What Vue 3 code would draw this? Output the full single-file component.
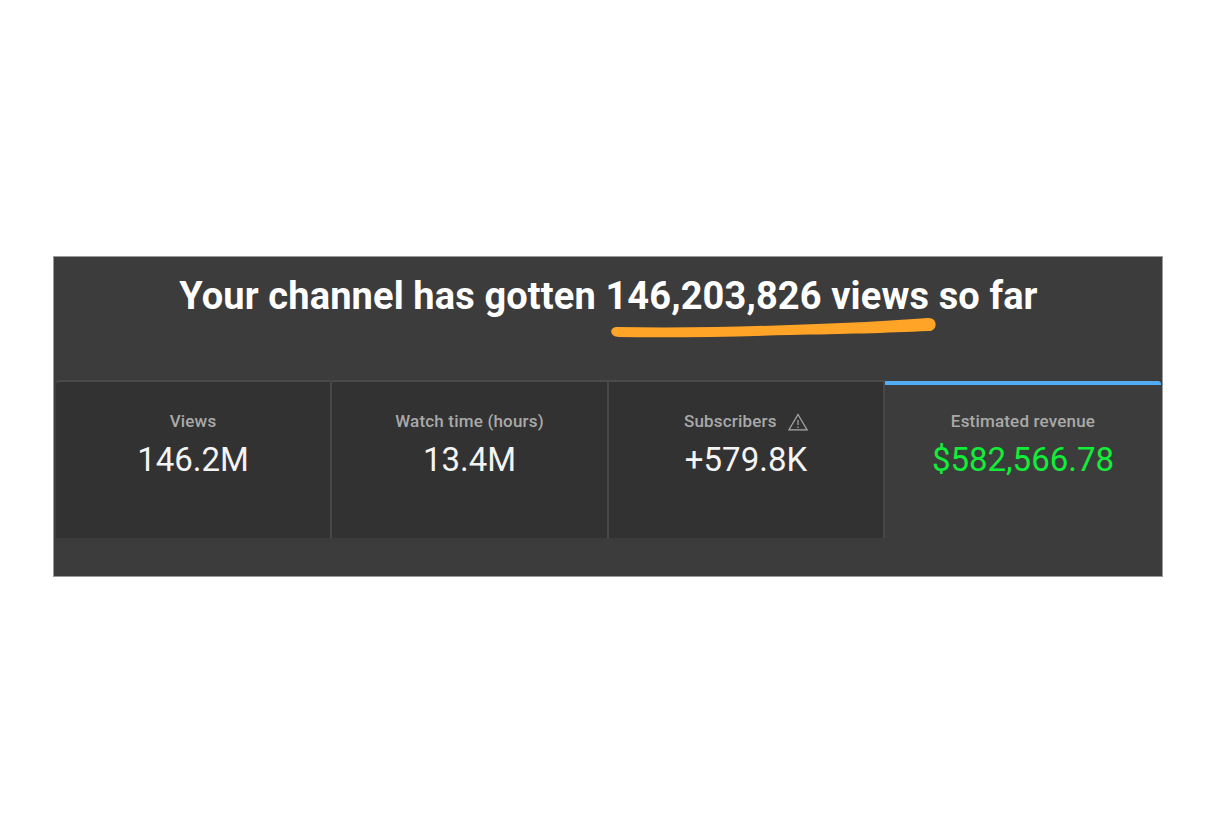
<template>
  <div class="page">
    <section class="panel">
      <h1 class="headline">
        Your channel has gotten
        <span class="marked">
          146,203,826 views
          <svg class="scribble" viewBox="0 0 335 25" aria-hidden="true">
            <path
              d="M12 12C70 13 130 12 185 10C240 8 285 6 323 3C333 2.500 333 15.500 324 16C280 18 240 19 185 20C130 21.500 70 23 14 22C4 22 4 12 12 12Z"
            />
          </svg>
        </span>
        so far
      </h1>

      <div class="tabs">
        <div
          v-for="tab in tabs"
          :key="tab.label"
          class="tab"
          :class="{ active: tab.active }"
        >
          <div class="label">
            {{ tab.label }}
            <svg v-if="tab.warn" class="warn" viewBox="0 0 20 18" aria-hidden="true">
              <path d="M10 1.500L19 16.800H1Z" />
              <path d="M10 7V12M10 13.500V15" />
            </svg>
          </div>
          <div class="value">{{ tab.value }}</div>
        </div>
      </div>
    </section>
  </div>
</template>

<script setup>
const tabs = [
  { label: 'Views', value: '146.2M' },
  { label: 'Watch time (hours)', value: '13.4M' },
  { label: 'Subscribers', value: '+579.8K', warn: true },
  { label: 'Estimated revenue', value: '$582,566.78', active: true }
]
</script>

<style>
html,
body {
  background: #fff;
}
</style>

<style scoped>
.page {
  height: 832px;
  box-sizing: border-box;
  padding: 256px 53px 0;
  font-family: Roboto, "Liberation Sans", sans-serif;
}

.panel {
  width: 1110px;
  height: 321px;
  box-sizing: border-box;
  border: 1px solid #9a9a9a;
  background: #3c3c3c;
  padding: 0 1px 38px 2px;
  display: flex;
  flex-direction: column;
}

.headline {
  margin: 0;
  height: 123px;
  padding-top: 15px;
  box-sizing: border-box;
  text-align: center;
  font-size: 38px;
  line-height: 48px;
  font-weight: 700;
  letter-spacing: 0.12px;
  color: #fff;
}

.marked {
  position: relative;
}

.scribble {
  position: absolute;
  left: 0;
  top: 41px;
  width: 335px;
  height: 25px;
}

.scribble path {
  fill: #ffa426;
}

.tabs {
  flex: 1;
  display: grid;
  grid-template-columns: 276px 277px 276px 1fr;
}

.tab {
  box-sizing: border-box;
  background: #323232;
  border-top: 2px solid #4a4a4a;
  border-right: 2px solid #484848;
  padding-top: 28px;
  text-align: center;
}

.tab:first-child {
  border-top-left-radius: 4px;
}

.tab.active {
  background: transparent;
  margin-top: 1px;
  border-top: 4px solid #52acf3;
  border-right: 0;
  border-top-right-radius: 3px;
  padding-top: 25px;
}

.label {
  font-size: 17px;
  line-height: 22px;
  font-weight: 500;
  color: #a9a9a9;
  letter-spacing: 0.18px;
}

.warn {
  width: 20px;
  height: 18px;
  margin-left: 7px;
  vertical-align: -4px;
  fill: none;
  stroke: #a9a9a9;
  stroke-width: 1.2;
}

.value {
  margin-top: 8px;
  font-size: 33px;
  line-height: 40px;
  font-weight: 400;
  color: #f4f4f4;
}

.active .value {
  color: #10ee38;
}
</style>
